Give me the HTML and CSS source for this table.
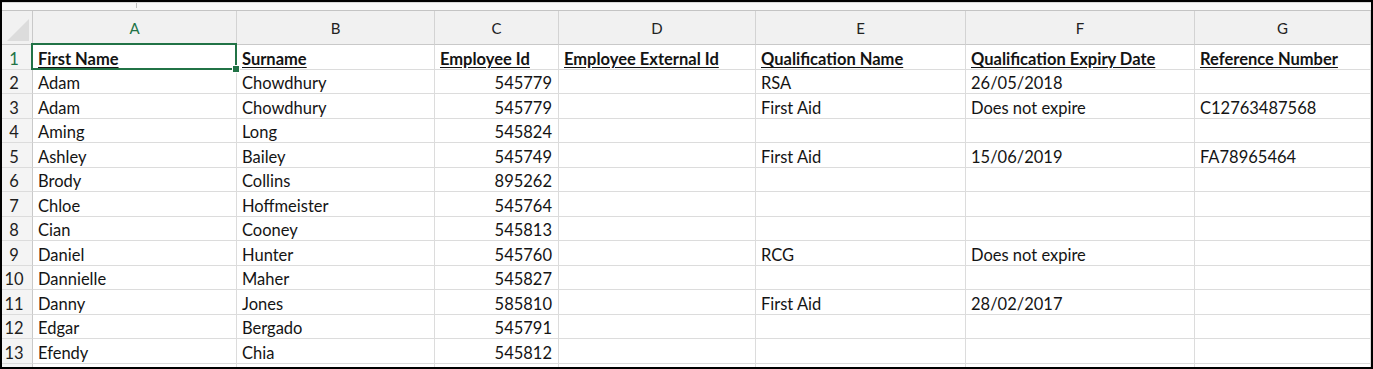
FILE: index.html
```html
<!DOCTYPE html>
<html lang="en">
<head>
<meta charset="utf-8">
<title>Qualifications</title>
<link rel="stylesheet" href="styles.css">
</head>
<body>
<div class="window">
  <div class="topbar"><span class="topbar-fill"></span></div>
  <div class="sheet">
    <div class="corner"></div>
    <div class="colhdr sel-col">A</div>
    <div class="colhdr">B</div>
    <div class="colhdr">C</div>
    <div class="colhdr">D</div>
    <div class="colhdr">E</div>
    <div class="colhdr">F</div>
    <div class="colhdr">G</div>

    <div class="rowhdr sel-row">1</div>
    <div class="cell head active"><span>First Name</span><div class="selection"><span class="handle"></span></div></div>
    <div class="cell head"><span>Surname</span></div>
    <div class="cell head"><span>Employee Id</span></div>
    <div class="cell head"><span>Employee External Id</span></div>
    <div class="cell head"><span>Qualification Name</span></div>
    <div class="cell head"><span>Qualification Expiry Date</span></div>
    <div class="cell head"><span>Reference Number</span></div>

    <div class="rowhdr">2</div>
    <div class="cell">Adam</div><div class="cell">Chowdhury</div><div class="cell num">545779</div><div class="cell"></div><div class="cell">RSA</div><div class="cell">26/05/2018</div><div class="cell"></div>

    <div class="rowhdr">3</div>
    <div class="cell">Adam</div><div class="cell">Chowdhury</div><div class="cell num">545779</div><div class="cell"></div><div class="cell">First Aid</div><div class="cell">Does not expire</div><div class="cell">C12763487568</div>

    <div class="rowhdr">4</div>
    <div class="cell">Aming</div><div class="cell">Long</div><div class="cell num">545824</div><div class="cell"></div><div class="cell"></div><div class="cell"></div><div class="cell"></div>

    <div class="rowhdr">5</div>
    <div class="cell">Ashley</div><div class="cell">Bailey</div><div class="cell num">545749</div><div class="cell"></div><div class="cell">First Aid</div><div class="cell">15/06/2019</div><div class="cell">FA78965464</div>

    <div class="rowhdr">6</div>
    <div class="cell">Brody</div><div class="cell">Collins</div><div class="cell num">895262</div><div class="cell"></div><div class="cell"></div><div class="cell"></div><div class="cell"></div>

    <div class="rowhdr">7</div>
    <div class="cell">Chloe</div><div class="cell">Hoffmeister</div><div class="cell num">545764</div><div class="cell"></div><div class="cell"></div><div class="cell"></div><div class="cell"></div>

    <div class="rowhdr">8</div>
    <div class="cell">Cian</div><div class="cell">Cooney</div><div class="cell num">545813</div><div class="cell"></div><div class="cell"></div><div class="cell"></div><div class="cell"></div>

    <div class="rowhdr">9</div>
    <div class="cell">Daniel</div><div class="cell">Hunter</div><div class="cell num">545760</div><div class="cell"></div><div class="cell">RCG</div><div class="cell">Does not expire</div><div class="cell"></div>

    <div class="rowhdr">10</div>
    <div class="cell">Dannielle</div><div class="cell">Maher</div><div class="cell num">545827</div><div class="cell"></div><div class="cell"></div><div class="cell"></div><div class="cell"></div>

    <div class="rowhdr">11</div>
    <div class="cell">Danny</div><div class="cell">Jones</div><div class="cell num">585810</div><div class="cell"></div><div class="cell">First Aid</div><div class="cell">28/02/2017</div><div class="cell"></div>

    <div class="rowhdr">12</div>
    <div class="cell">Edgar</div><div class="cell">Bergado</div><div class="cell num">545791</div><div class="cell"></div><div class="cell"></div><div class="cell"></div><div class="cell"></div>

    <div class="rowhdr">13</div>
    <div class="cell">Efendy</div><div class="cell">Chia</div><div class="cell num">545812</div><div class="cell"></div><div class="cell"></div><div class="cell"></div><div class="cell"></div>

    <div class="rowhdr"></div>
    <div class="cell"></div><div class="cell"></div><div class="cell"></div><div class="cell"></div><div class="cell"></div><div class="cell"></div><div class="cell"></div>
  </div>
</div>
</body>
</html>
```

FILE: styles.css
```css
* { box-sizing: border-box; }

html, body {
  margin: 0;
  padding: 0;
  background: #ffffff;
}

.window {
  width: 1373px;
  height: 369px;
  border: 2px solid #000000;
  overflow: hidden;
  background: #ffffff;
  font-family: "Lato", "Liberation Sans", sans-serif;
  color: #141414;
}

.topbar {
  height: 9px;
  background: #f7f7f7;
  border-top: 1px solid #d6d6d6;
  border-bottom: 1px solid #c4c4c4;
  display: flex;
}

.topbar-fill {
  display: block;
  margin-left: 134px;
  width: 1px;
  height: 5px;
  background: #bdbdbd;
}

.sheet {
  display: grid;
  grid-template-columns: 31px 204px 198px 124px 197px 210px 229px 1fr;
  grid-template-rows: 34px repeat(14, 24.5px);
  font-size: 16.5px;
}

.corner {
  background: #f1f1f1;
  border-right: 1px solid #c9c9c9;
  border-bottom: 1px solid #c9c9c9;
  position: relative;
  overflow: hidden;
}

.corner::after {
  content: "";
  position: absolute;
  right: 3px;
  bottom: 3px;
  width: 0;
  height: 0;
  border-left: 22px solid transparent;
  border-bottom: 22px solid #dcdcdc;
}

.colhdr {
  background: #f1f1f1;
  border-right: 1px solid #d3d3d3;
  border-bottom: 1px solid #c9c9c9;
  display: flex;
  align-items: center;
  justify-content: center;
  font-size: 15px;
  color: #222222;
  padding-top: 1px;
}

.colhdr.sel-col { color: #217346; }

.rowhdr {
  background: #f4f4f4;
  border-right: 1px solid #c9c9c9;
  border-bottom: 1px solid #dcdcdc;
  display: flex;
  align-items: center;
  justify-content: center;
  padding-right: 6px;
  padding-top: 4px;
  color: #1e1e1e;
}

.rowhdr.sel-row { color: #217346; }

.cell {
  border-right: 1px solid #dcdcdc;
  border-bottom: 1px solid #dcdcdc;
  display: flex;
  align-items: center;
  padding: 4px 5px 0 5px;
  white-space: nowrap;
  overflow: visible;
}

.cell.num { justify-content: flex-end; padding-right: 6px; }

.cell.head { padding-top: 5px; }

.cell.head span {
  font-weight: 700;
  text-decoration: underline;
  text-underline-offset: 2px;
}

.cell.active { position: relative; }

.selection {
  position: absolute;
  left: -2px;
  top: -2px;
  right: -1px;
  bottom: -1px;
  border: 2px solid #217346;
  pointer-events: none;
}

.handle {
  position: absolute;
  right: -5px;
  bottom: -5px;
  width: 8px;
  height: 8px;
  background: #217346;
  border: 1px solid #ffffff;
}
```
